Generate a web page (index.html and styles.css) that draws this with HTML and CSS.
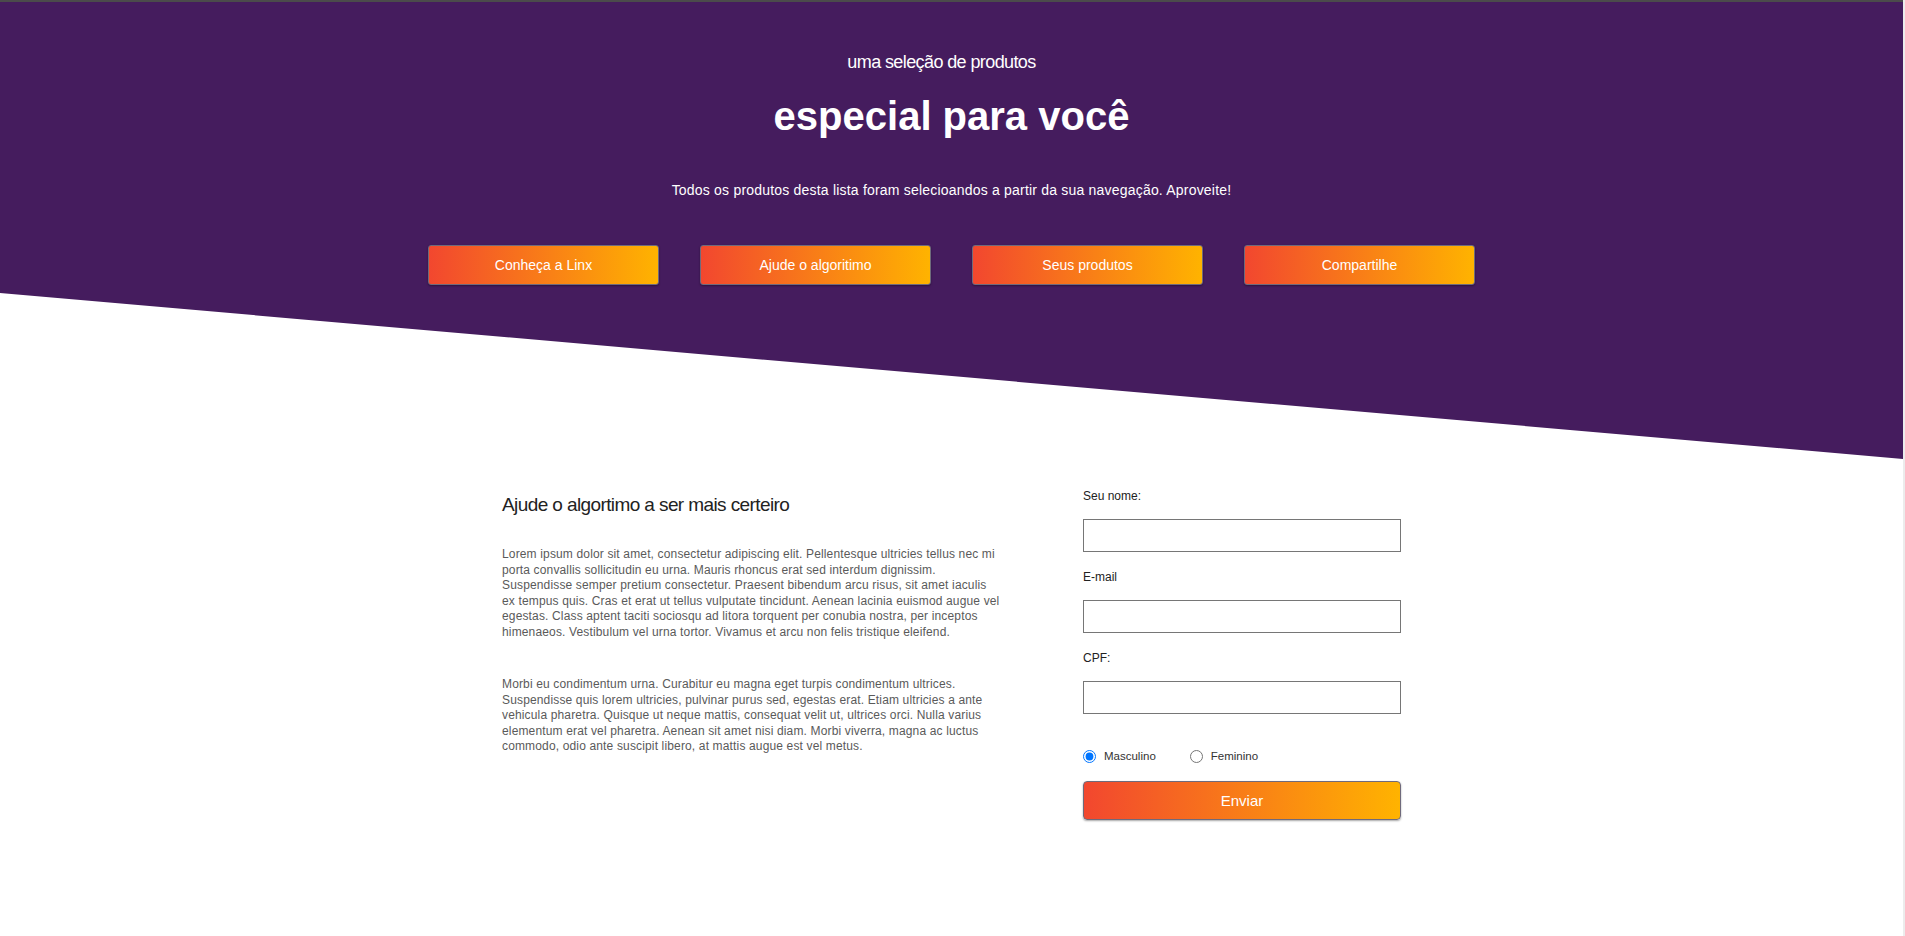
FILE: index.html
```html
<!DOCTYPE html>
<html lang="pt-BR">
<head>
<meta charset="utf-8">
<title>Especial para você</title>
<link rel="stylesheet" href="styles.css">
</head>
<body>
<div class="page">
  <header class="hero">
    <p class="kicker">uma seleção de produtos</p>
    <h1 class="title">especial para você</h1>
    <p class="lead">Todos os produtos desta lista foram selecioandos a partir da sua navegação. Aproveite!</p>
    <nav class="actions">
      <a class="btn" href="#">Conheça a Linx</a>
      <a class="btn" href="#">Ajude o algoritimo</a>
      <a class="btn" href="#">Seus produtos</a>
      <a class="btn" href="#">Compartilhe</a>
    </nav>
  </header>

  <main class="content">
    <section class="info">
      <h2 class="info-title">Ajude o algortimo a ser mais certeiro</h2>
      <p class="info-text first">Lorem ipsum dolor sit amet, consectetur adipiscing elit. Pellentesque ultricies tellus nec mi porta convallis sollicitudin eu urna. Mauris rhoncus erat sed interdum dignissim. Suspendisse semper pretium consectetur. Praesent bibendum arcu risus, sit amet iaculis ex tempus quis. Cras et erat ut tellus vulputate tincidunt. Aenean lacinia euismod augue vel egestas. Class aptent taciti sociosqu ad litora torquent per conubia nostra, per inceptos himenaeos. Vestibulum vel urna tortor. Vivamus et arcu non felis tristique eleifend.</p>
      <p class="info-text second">Morbi eu condimentum urna. Curabitur eu magna eget turpis condimentum ultrices. Suspendisse quis lorem ultricies, pulvinar purus sed, egestas erat. Etiam ultricies a ante vehicula pharetra. Quisque ut neque mattis, consequat velit ut, ultrices orci. Nulla varius elementum erat vel pharetra. Aenean sit amet nisi diam. Morbi viverra, magna ac luctus commodo, odio ante suscipit libero, at mattis augue est vel metus.</p>
    </section>

    <form class="form">
      <label class="field-label" for="nome">Seu nome:</label>
      <input class="field" id="nome" type="text">
      <label class="field-label" for="email">E-mail</label>
      <input class="field" id="email" type="text">
      <label class="field-label" for="cpf">CPF:</label>
      <input class="field" id="cpf" type="text">
      <div class="radios">
        <label class="radio"><input type="radio" name="sexo" checked> Masculino</label>
        <label class="radio"><input type="radio" name="sexo"> Feminino</label>
      </div>
      <button class="btn submit" type="button">Enviar</button>
    </form>
  </main>
</div>
</body>
</html>
```

FILE: styles.css
```css
* { box-sizing: border-box; }

html, body {
  margin: 0;
  padding: 0;
  background: #ececec;
}

body {
  font-family: "Liberation Sans", Arial, Helvetica, sans-serif;
  color: #222;
}

.page {
  width: calc(100% - 2px);
  min-height: 100vh;
  background: #fff;
}

.hero {
  height: 459px;
  border-top: 2px solid #4b4b4b;
  background: #451c5e;
  color: #fff;
  text-align: center;
  clip-path: polygon(0 0, 100% 0, 100% 100%, 0 293px);
  display: flex;
  flex-direction: column;
  align-items: center;
}

.kicker {
  margin: 49px 20px 0 0;
  font-size: 18px;
  line-height: 22px;
  letter-spacing: -0.6px;
}

.title {
  margin: 20px 0 0;
  font-size: 40px;
  line-height: 46px;
  font-weight: bold;
}

.lead {
  margin: 43px 0 0;
  font-size: 14px;
  line-height: 17px;
  letter-spacing: 0.2px;
}

.actions {
  margin-top: 46px;
  display: flex;
  gap: 41px;
}

.btn {
  display: flex;
  align-items: center;
  justify-content: center;
  width: 231px;
  height: 40px;
  border: 1px solid #6f6a7c;
  border-radius: 3px;
  background: linear-gradient(to right, #f2472f, #ffb300);
  color: #fff;
  font-family: inherit;
  font-size: 14px;
  text-decoration: none;
  box-shadow: 0 1px 2px rgba(0, 0, 0, 0.35);
}

.content {
  display: flex;
  justify-content: center;
  gap: 81px;
  padding-top: 30px;
  padding-bottom: 80px;
}

.info {
  width: 500px;
}

.info-title {
  margin: 5px 0 0;
  font-size: 19px;
  line-height: 22px;
  font-weight: normal;
  letter-spacing: -0.6px;
  color: #222;
}

.info-text {
  margin: 0;
  font-size: 12px;
  line-height: 15.5px;
  color: #5a5a5a;
  letter-spacing: 0.15px;
}

.info-text.first { margin-top: 31px; }
.info-text.second { margin-top: 37px; }

.form {
  width: 318px;
  display: flex;
  flex-direction: column;
}

.field-label {
  font-size: 12px;
  line-height: 14px;
  margin-bottom: 16px;
  color: #222;
}

.field {
  height: 33px;
  border: 1px solid #767676;
  border-radius: 0;
  margin: 0 0 18px;
  padding: 0 6px;
  font-family: inherit;
  font-size: 13px;
}

.field:last-of-type { margin-bottom: 35px; }

.radios {
  display: flex;
  align-items: center;
  gap: 34px;
  height: 14px;
  margin-bottom: 18px;
}

.radio {
  display: flex;
  align-items: center;
  gap: 8px;
  font-size: 11.5px;
  color: #333;
}

.radio input {
  margin: 0;
  width: 13px;
  height: 13px;
}

.btn.submit {
  width: 318px;
  height: 39px;
  border-radius: 4px;
  font-size: 15px;
  cursor: pointer;
}
```
